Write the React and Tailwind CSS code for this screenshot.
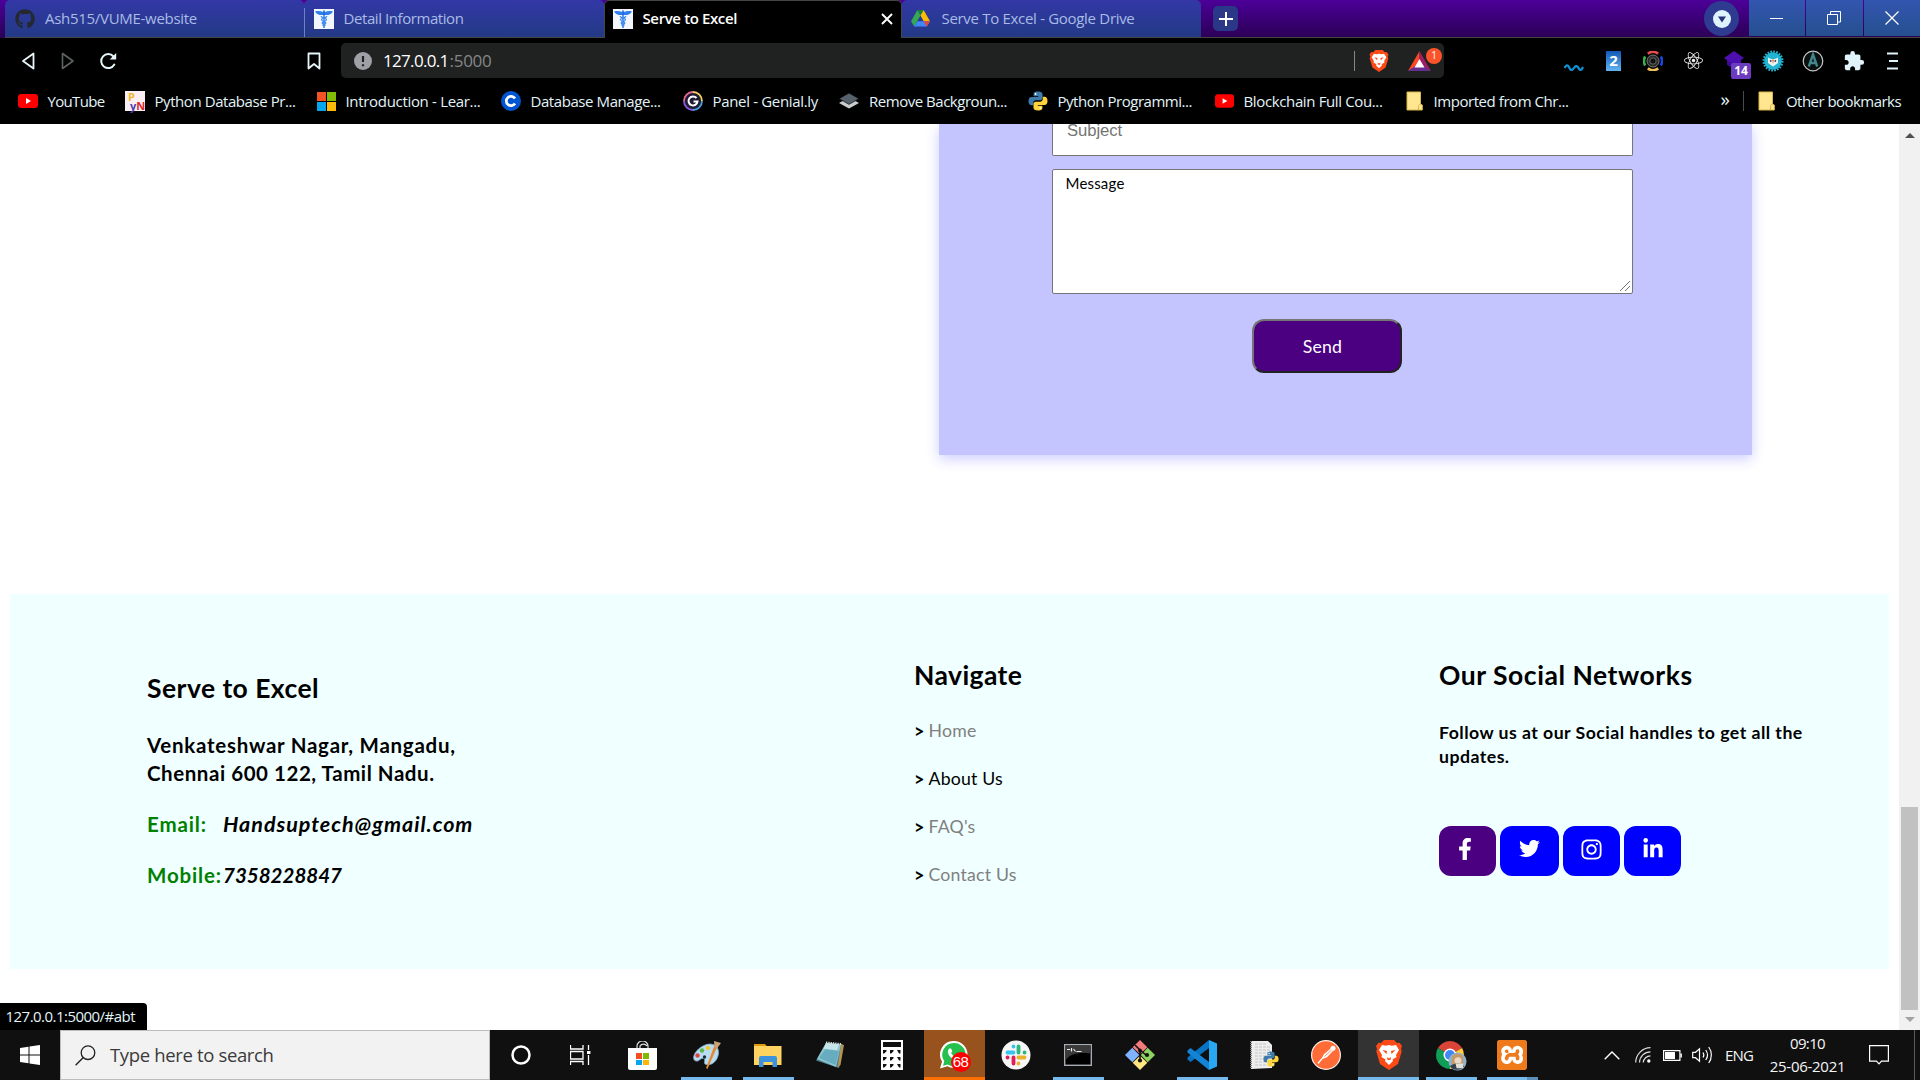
import { FaGithub, FaReact, FaFacebookF, FaTwitter, FaInstagram, FaLinkedinIn } from "react-icons/fa";
import { MdExtension } from "react-icons/md";
import { SiXampp } from "react-icons/si";

/* ---------- shared drawings ---------- */

function YouTube({ className = "w-5 h-[14px]" }) {
  return (
    <svg viewBox="0 0 20 14" className={className}>
      <rect width="20" height="14" rx="3.2" fill="#f00" />
      <path d="M8 4v6l5-3z" fill="#fff" />
    </svg>
  );
}

function Caduceus() {
  return (
    <svg viewBox="0 0 20 20" className="w-5 h-5 shrink-0">
      <rect width="20" height="20" fill="#f3f6fb" />
      <path d="M1 2.500c3-.8 6-.6 8 .6 0-1.200.3-1.800 1-1.800s1 .6 1 1.800c2-1.200 5-1.400 8-.6-1.500 2.600-4 3.600-6.600 3.600H7.600C5 6.100 2.500 5.100 1 2.500z" fill="#2f7fee" />
      <path d="M10 3v16" stroke="#1f62d8" strokeWidth="1.300" />
      <path d="M7 7.200c1 2 5 1.500 5.500 3.300.4 1.700-4.300 1.800-4.300 3.500 0 1.300 3 1.600 2.800 3M13 7.200c-1 2-5 1.500-5.500 3.300-.4 1.700 4.300 1.800 4.300 3.500 0 1.300-3 1.600-2.800 3" fill="none" stroke="#3b8bf2" strokeWidth="1.300" />
    </svg>
  );
}

function Drive() {
  return (
    <svg viewBox="0 0 20 18" className="w-[19px] h-[17px]">
      <path d="M6.700 0h6.600L10 5.900z" fill="#188038" />
      <path d="M6.700 0 10 5.900 3.300 17.600 0 11.800z" fill="#34a853" />
      <path d="M13.300 0 20 11.800h-6.600L10 5.900z" fill="#fbbc04" />
      <path d="M6.600 11.800H20l-3.300 5.800H3.300z" fill="#4285f4" />
      <path d="M13.400 11.800H20l-3.300 5.800z" fill="#ea4335" />
    </svg>
  );
}

function Folder() {
  return (
    <svg viewBox="0 0 17 20" className="w-[17px] h-5">
      <path d="M1 1h13.500v12l1.800 1v5H1z" fill="#ffe68f" stroke="#d9b648" strokeWidth="1" />
      <path d="M12.500 19v-4.500l2-1.500" fill="none" stroke="#d9b648" />
    </svg>
  );
}

function PythonLogo({ className }) {
  return (
    <svg viewBox="0 0 20 20" className={className}>
      <path d="M9.900.5C6 .5 5.600 2 5.600 3.200v2h4.600v.7H3.600C1.600 5.900.5 7.500.5 10s1 4.200 2.900 4.200h1.800v-2.300c0-1.500 1.200-2.600 2.700-2.600h4.500c1.200 0 2.100-1 2.100-2.200V3.200C14.500 1.500 12.900.5 9.900.5z" fill="#3f7cad" />
      <path d="M10.100 19.500c3.900 0 4.300-1.500 4.300-2.700v-2H9.800v-.7h6.600c2 0 3.100-1.600 3.100-4.100s-1-4.200-2.900-4.200h-1.800v2.300c0 1.500-1.200 2.600-2.700 2.600H7.600c-1.200 0-2.100 1-2.100 2.200v3.900c0 1.700 1.600 2.700 4.600 2.700z" fill="#ffd43b" />
      <circle cx="7.600" cy="3" r=".9" fill="#fff" />
      <circle cx="12.400" cy="17" r=".9" fill="#fff" />
    </svg>
  );
}

function BraveLion({ className }) {
  return (
    <svg viewBox="0 0 26 30" className={className}>
      <path d="M8 0h10l3 3 2.500-.3L26 6l-1 3 .7 2.500L22 24l-9 6-9-6L.3 11.500 1 9 0 6l2.500-3.300L5 3z" fill="#fb4a16" />
      <path d="M13 5l3 .8L20 5l3 5-3 5 .5 2-4 2.500L17 21l-4 4-4-4 .5-1.500-4-2.500.5-2-3-5 3-5 4 .8z" fill="#fff" />
      <path d="M6.500 10l4.500 1-.5 3zM19.500 10 15 11l.5 3zM11 17l2 1.500 2-1.500-.5 3h-3z" fill="#fb4a16" />
    </svg>
  );
}

/* ---------- tab strip ---------- */

function TabStrip() {
  const tab = "flex h-[38px] items-center bg-linear-to-b from-[#3237a6] to-[#233a85] text-[#a9bbe6] rounded-t-[5px] border-b border-[#464646]";
  return (
    <div className="flex h-[38px] bg-linear-to-b from-[#4c0099] to-[#2b0055] pl-[5px] text-[15px] whitespace-nowrap">
      <div className={`${tab} w-[299px] pl-[10px]`}>
        <FaGithub className="h-5 w-5 text-[#24292e]" />
        <span className="ml-[10px] tracking-[-0.291px]">Ash515/VUME-website</span>
      </div>
      <div className={`${tab} w-[300px]`}>
        <span className="mt-2 h-[29px] w-px bg-[#6f80c8]" />
        <span className="ml-[9px] flex"><Caduceus /></span>
        <span className="ml-[9.500px] tracking-[-0.424px]">Detail Information</span>
      </div>
      <div className="flex h-[38px] w-[298px] items-center rounded-t-[5px] border-x border-t border-[#464646] bg-black pl-2 pb-[2px] text-white">
        <Caduceus />
        <span className="ml-[9.500px] font-semibold tracking-[-0.379px]">Serve to Excel</span>
        <svg viewBox="0 0 12 12" className="ml-auto mr-[8px] h-3 w-3"><path d="M1 1l10 10M11 1 1 11" stroke="#fff" strokeWidth="1.900" /></svg>
      </div>
      <div className={`${tab} w-[299px] pl-[9px]`}>
        <Drive />
        <span className="ml-[11.500px] tracking-[-0.307px]">Serve To Excel - Google Drive</span>
      </div>
      <div className="flex grow border-b border-[#464646]">
        <div className="ml-[12px] mt-[6px] flex h-[25px] w-[25px] items-center justify-center rounded-[5px] bg-[#2b3787]">
          <svg viewBox="0 0 16 16" className="h-4 w-4"><path d="M8 1v14M1 8h14" stroke="#fff" strokeWidth="2" /></svg>
        </div>
        <div className="ml-auto mr-[10px] mt-px flex h-[35px] w-[35px] items-center justify-center rounded-full bg-[#2f3a91]">
          <svg viewBox="0 0 18 18" className="h-[18px] w-[18px]"><circle cx="9" cy="9" r="9" fill="#def3fb" /><path d="M5 6.500h8L9 12.500z" fill="#26337c" /></svg>
        </div>
        <div className="flex h-[36px] gap-px *:flex *:items-center *:justify-center *:bg-linear-to-b *:from-[#3355b0] *:to-[#25508f]">
          <div className="w-14"><svg viewBox="0 0 14 14" className="h-[14px] w-[14px]"><path d="M0 7.500h13" stroke="#fff" /></svg></div>
          <div className="w-[57px]"><svg viewBox="0 0 14 14" className="mr-px h-[14px] w-[14px]"><path d="M.5 3.500h10v10H.5zM3.500 3.500v-3h10v10.500H10.500" fill="none" stroke="#fff" /></svg></div>
          <div className="w-14"><svg viewBox="0 0 14 14" className="mr-px h-[14px] w-[14px]"><path d="M.5.5l13 13M13.500.5l-13 13" stroke="#fff" strokeWidth="1.200" /></svg></div>
        </div>
      </div>
    </div>
  );
}

/* ---------- toolbar ---------- */

function Bat() {
  return (
    <svg viewBox="0 0 23 20" className="h-5 w-[23px]">
      <path d="M11.500 0 0 20l11.500-6.500z" fill="#ff4724" />
      <path d="M11.500 0 23 20l-11.500-6.500z" fill="#9e1f63" />
      <path d="M0 20h23L11.500 12z" fill="#662d91" />
      <path d="M11.500 8 6.500 16.500h10z" fill="#fff" />
    </svg>
  );
}

function Extensions() {
  return (
    <div className="ml-auto flex h-full items-center pr-[21px]">
      <svg viewBox="0 0 20 8" className="mt-[12px] h-2 w-5"><path d="M.5 5c2-3.500 3.500-3.500 5 0s3.500 1.500 4.500 0 3-3.500 4.500 0 3.500 1.500 4.500-1" fill="none" stroke="#0d93d8" strokeWidth="2.200" /></svg>
      <div className="ml-[22px] flex h-5 w-[15px] items-center justify-center bg-linear-to-b from-[#1058b5] to-[#63b4f2] text-[15px] font-bold text-white">2</div>
      <svg viewBox="0 0 20 20" className="ml-[22px] h-5 w-5">
        <path d="M4.800 2.600a9 9 0 0 1 10.400 0" fill="none" stroke="#e94b4b" strokeWidth="2.600" />
        <path d="M17.800 5.500a9 9 0 0 1 0 9" fill="none" stroke="#1746e0" strokeWidth="2.600" />
        <path d="M15.200 17.400a9 9 0 0 1-10.400 0" fill="none" stroke="#efc05a" strokeWidth="2.600" />
        <path d="M2.200 14.500a9 9 0 0 1 0-9" fill="none" stroke="#34b249" strokeWidth="2.600" />
        <circle cx="10" cy="10" r="6" fill="#2b2b2b" stroke="#8d8d8d" strokeWidth=".8" />
        <circle cx="10" cy="10" r="3.200" fill="#111" stroke="#777" strokeWidth=".8" />
      </svg>
      <FaReact className="ml-[21px] h-[19px] w-[19px] text-[#eee]" />
      <div className="relative ml-[21px] h-5 w-5">
        <svg viewBox="0 0 20 20" className="h-5 w-5"><path d="M3 9v5l7 4V11z" fill="#3c0a94" /><path d="M17 9v5l-7 4V11z" fill="#4a0cad" /><path d="M10 0l10 7-10 7L0 7z" fill="#4d0fae" /></svg>
        <div className="absolute left-[7px] top-[12px] flex h-[16px] w-5 items-center justify-center rounded-[2px] bg-[#6c3cc0] text-[12px] font-bold text-white">14</div>
      </div>
      <svg viewBox="0 0 22 22" className="ml-[18px] h-[22px] w-[22px]">
        <circle cx="11" cy="11" r="8.800" fill="#22b5d3" />
        <circle cx="11" cy="11" r="9.400" fill="none" stroke="#22b5d3" strokeWidth="2.200" strokeDasharray="1.700 1.250" />
        <path d="M6 7.500l3 1.500h4l3-1.500v5.500l-5 3.500-5-3.500z" fill="#eef2f0" />
        <circle cx="8.700" cy="11" r=".9" fill="#345" /><circle cx="13.300" cy="11" r=".9" fill="#345" /><path d="M10 9.500h2l-1 4.500z" fill="#e8783a" />
      </svg>
      <svg viewBox="0 0 22 22" className="ml-[18px] h-[22px] w-[22px]">
        <circle cx="11" cy="11" r="9.800" fill="#0a0f10" stroke="#c9c9c9" strokeWidth="1.200" />
        <path d="M6.800 16.500 11 4.500l4.200 12M8.300 13h5.500" fill="none" stroke="#42868b" strokeWidth="2.400" />
      </svg>
      <MdExtension className="ml-[19px] h-[22px] w-[22px] text-[#e1f3fa]" />
      <svg viewBox="0 0 12 18" className="ml-[22px] h-[18px] w-3"><path d="M0 1.500h11M2 9h9M0 16.500h11" stroke="#e1f3fa" strokeWidth="2" /></svg>
    </div>
  );
}

function Toolbar() {
  return (
    <div className="flex h-[45px] items-center bg-black">
      <svg viewBox="0 0 13 18" className="ml-[21px] h-[18px] w-[14px]"><path d="M12 1.500v15L1.500 9z" fill="none" stroke="#e6f6fb" strokeWidth="1.800" strokeLinejoin="round" /></svg>
      <svg viewBox="0 0 13 18" className="ml-[26px] h-[18px] w-[14px]"><path d="M1 1.500v15L11.500 9z" fill="none" stroke="#5d6264" strokeWidth="1.600" strokeLinejoin="round" /></svg>
      <svg viewBox="0 0 18 18" className="ml-[24px] h-[18px] w-[18px]"><path d="M15.300 12.500A7 7 0 1 1 14.500 4.500" fill="none" stroke="#e6f6fb" strokeWidth="2" strokeLinecap="round" /><path d="M17.200 1v6.500h-6.500z" fill="#e6f6fb" /></svg>
      <svg viewBox="0 0 14 18" className="ml-[190px] h-[18px] w-[14px]"><path d="M1.500 1.500h11v15L7 12l-5.500 4.500z" fill="none" stroke="#e6f6fb" strokeWidth="1.800" strokeLinejoin="round" /></svg>
      <div className="ml-[20px] flex h-[35px] w-[1103px] items-center rounded-[5px] bg-[#202222] pl-[13px] text-[17px]">
        <svg viewBox="0 0 18 18" className="h-[18px] w-[18px]"><circle cx="9" cy="9" r="9" fill="#9da1a7" /><path d="M9 4v6M9 12.200v2" stroke="#202222" strokeWidth="2.200" /></svg>
        <span className="ml-[11px] w-[66.500px] tracking-[-0.680px] text-white">127.0.0.1</span>
        <span className="tracking-[-0.269px] text-[#858786]">:5000</span>
        <span className="ml-auto h-5 w-px bg-[#868686]" />
        <BraveLion className="ml-[14px] h-[22px] w-[20px]" />
        <div className="relative ml-[19px] mr-[13px] flex">
          <Bat />
          <div className="absolute -top-[3px] left-[18px] flex h-4 w-4 items-center justify-center rounded-full bg-[#fb542b] text-[10px] text-white">1</div>
        </div>
      </div>
      <Extensions />
    </div>
  );
}

/* ---------- bookmarks bar ---------- */

function Bookmarks() {
  const item = "flex items-center";
  const icon = "flex w-5 shrink-0 items-center justify-center mr-[9.500px]";
  return (
    <div className="flex h-[41px] items-center bg-black pb-[5px] pl-[18px] text-[15px] whitespace-nowrap text-[#e3f4f8]">
      <div className={`${item} w-[107px]`}><span className={icon}><YouTube /></span><span className="tracking-[-0.667px]">YouTube</span></div>
      <div className={`${item} w-[191px]`}>
        <span className={icon}>
          <span className="flex h-5 w-5 flex-col bg-[#fbeef2] pt-px pl-[3px] text-[11px] leading-[9px] font-bold">
            <span className="text-[#efb52a]">P</span>
            <span className="flex pl-[2px]">
              <span className="text-[#4b3fb5]">y</span>
              <span className="text-[#e0262e]">N</span>
            </span>
          </span>
        </span>
        <span className="tracking-[-0.431px]">Python Database Pr...</span>
      </div>
      <div className={`${item} w-[185px]`}>
        <span className={icon}><span className="grid grid-cols-2 gap-px"><i className="h-[9px] w-[9px] bg-[#f35325]" /><i className="h-[9px] w-[9px] bg-[#81bc06]" /><i className="h-[9px] w-[9px] bg-[#05a6f0]" /><i className="h-[9px] w-[9px] bg-[#ffba08]" /></span></span>
        <span className="tracking-[-0.317px]">Introduction - Lear...</span>
      </div>
      <div className={`${item} w-[182px]`}>
        <span className={icon}><svg viewBox="0 0 20 20" className="h-5 w-5"><circle cx="10" cy="10" r="10" fill="#0056d2" /><path d="M14 7.500A4.700 4.700 0 1 0 14 12.500" fill="none" stroke="#fff" strokeWidth="2.700" /></svg></span>
        <span className="tracking-[-0.424px]">Database Manage...</span>
      </div>
      <div className={`${item} w-[156px]`}>
        <span className={icon}>
          <svg viewBox="0 0 20 20" className="h-5 w-5">
            <circle cx="10" cy="10" r="8.500" fill="#1f1a33" />
            <path d="M10 1a9 9 0 0 1 9 9" fill="none" stroke="#f0cf5a" strokeWidth="1.800" /><path d="M19 10a9 9 0 0 1-9 9" fill="none" stroke="#4f9be0" strokeWidth="1.800" />
            <path d="M10 19a9 9 0 0 1-9-9" fill="none" stroke="#8e5be0" strokeWidth="1.800" /><path d="M1 10a9 9 0 0 1 9-9" fill="none" stroke="#e86a9a" strokeWidth="1.800" />
            <path d="M13.500 7A4.500 4.500 0 1 0 14.500 10.500H10.500" fill="none" stroke="#fff" strokeWidth="2" />
          </svg>
        </span>
        <span className="tracking-[-0.327px]">Panel - Genial.ly</span>
      </div>
      <div className={`${item} w-[189px]`}>
        <span className={icon}><svg viewBox="0 0 20 16" className="h-4 w-5"><path d="M10 4.500 20 10l-10 5.500L0 10z" fill="#c9cdd0" /><path d="M10 0l10 5.700-10 5.700L0 5.700z" fill="#56616b" stroke="#000" strokeWidth=".6" /></svg></span>
        <span className="ml-[0.500px] tracking-[-0.474px]">Remove Backgroun...</span>
      </div>
      <div className={`${item} w-[186px]`}><span className={icon}><PythonLogo className="h-5 w-5" /></span><span className="tracking-[-0.467px]">Python Programmi...</span></div>
      <div className={`${item} w-[190px]`}><span className={icon}><YouTube className="h-[14px] w-[19px]" /></span><span className="tracking-[-0.367px]">Blockchain Full Cou...</span></div>
      <div className={item}><span className={icon}><Folder /></span><span className="tracking-[-0.442px]">Imported from Chr...</span></div>
      <div className="ml-auto flex items-center pr-[19px]">
        <span className="-mt-1 text-[19px] leading-none">»</span>
        <span className="ml-[13px] h-5 w-px bg-[#4b4b4b]" />
        <span className="mr-[11px] ml-[14px]"><Folder /></span>
        <span className="tracking-[-0.543px]">Other bookmarks</span>
      </div>
    </div>
  );
}

/* ---------- web page ---------- */

function ContactCard() {
  return (
    <div className="ml-[939px] h-[331px] w-[813px] bg-[#c4c4ff] pl-[113px] shadow-[0_4px_13px_#cdcdff]">
      <div className="h-[32px] w-[581px] rounded-b-[2px] border border-t-0 border-[#767676] bg-white pl-[14px] font-['Liberation_Sans',sans-serif] text-[16.700px] leading-[13px] tracking-[-0.094px] text-[#757575]">Subject</div>
      <div className="mt-[13px] flex h-[125px] w-[581px] rounded-[2px] border border-[#767676] bg-white pt-[3px] pl-[12.500px] text-[15px] leading-5 tracking-[0.191px] text-black">
        Message
        <svg viewBox="0 0 12 12" className="mr-px mb-px ml-auto h-3 w-3 self-end"><path d="M1 11 11 1M6 11l5-5" stroke="#666" strokeWidth=".9" /></svg>
      </div>
      <button className="mt-[25px] ml-[200px] block h-[54px] w-[150px] rounded-[12px] border-2 border-t-[#767676] border-r-[#222] border-b-[#222] border-l-[#767676] bg-[#4b0082] pt-[2px] pr-[9px] text-[17.700px] tracking-[0.188px] text-white">Send</button>
    </div>
  );
}

function NavLink({ children, active }) {
  return (
    <div className="flex h-12 items-center text-[17.700px] tracking-[0.2px]">
      <span className="w-[14.500px] text-[18px] font-bold text-black">&gt;</span>
      <span className={active ? "text-black" : "text-[#808080]"}>{children}</span>
    </div>
  );
}

function Footer() {
  const social = "flex h-[50px] w-[57px] items-center justify-center rounded-[12px] bg-[#0000ff] pb-[4px] text-white";
  return (
    <div className="mx-[10px] mt-[139px] flex h-[375px] w-[1879px] bg-[#f0ffff] pl-[137px] font-bold text-black">
      <div className="w-[767px] pt-[76px]">
        <h2 className="text-[26.500px] leading-9 tracking-[0.450px]">Serve to Excel</h2>
        <p className="mt-[25px] text-[20.500px] leading-7 tracking-[0.730px]">Venkateshwar Nagar, Mangadu,</p>
        <p className="text-[20.500px] leading-7 tracking-[0.550px]">Chennai 600 122, Tamil Nadu.</p>
        <p className="mt-[23px] flex text-[20.500px] leading-7"><span className="w-[76px] tracking-[0.850px] text-[#008000]">Email:</span><i className="text-[21.500px] tracking-[0.980px]">Handsuptech@gmail.com</i></p>
        <p className="mt-[23px] flex text-[20.500px] leading-7"><span className="w-[76px] tracking-[0.850px] text-[#008000]">Mobile:</span><i className="tracking-[0.010px]">7358228847</i></p>
      </div>
      <div className="w-[525px] pt-[63px]">
        <h2 className="text-[26.500px] leading-9 tracking-[0.400px]">Navigate</h2>
        <div className="mt-[14px] font-normal">
          <NavLink>Home</NavLink>
          <NavLink active>About Us</NavLink>
          <NavLink>FAQ's</NavLink>
          <NavLink>Contact Us</NavLink>
        </div>
      </div>
      <div className="pt-[63px]">
        <h2 className="text-[26.500px] leading-9 tracking-[0.530px]">Our Social Networks</h2>
        <p className="mt-[28px] text-[17.700px] leading-6 tracking-[0.460px]">Follow us at our Social handles to get all the<br />updates.</p>
        <div className="mt-[57px] flex gap-1">
          <div className="flex h-[50px] w-[57px] items-center justify-center rounded-[12px] bg-[#4b0082] pr-[6px] pb-[5px] text-white"><FaFacebookF className="h-[22px] w-[22px]" /></div>
          <div className="flex h-[50px] w-[59px] items-center justify-center rounded-[12px] bg-[#0000ff] pb-[5px] text-white"><FaTwitter className="h-[21px] w-[21px]" /></div>
          <div className={social}><FaInstagram className="h-[23px] w-[23px]" /></div>
          <div className={social}><FaLinkedinIn className="h-[22px] w-[22px]" /></div>
        </div>
      </div>
    </div>
  );
}

function Scrollbar() {
  return (
    <div className="flex w-[21px] flex-col items-center bg-[#f1f1f1]">
      <svg viewBox="0 0 10 5" className="mt-[9px] h-[5px] w-[10px]"><path d="M5 0l5 5H0z" fill="#505050" /></svg>
      <div className="mt-[669px] h-[203px] w-[17px] bg-[#c1c1c1]" />
      <svg viewBox="0 0 10 5" className="mt-[7px] h-[5px] w-[10px]"><path d="M5 5L0 0h10z" fill="#a3a3a3" /></svg>
    </div>
  );
}

function WebPage() {
  return (
    <div className="relative flex h-[906px] overflow-hidden bg-white">
      <div className="w-[1899px] overflow-hidden font-[Lato,sans-serif]">
        <ContactCard />
        <Footer />
      </div>
      <Scrollbar />
      <div className="absolute bottom-0 left-0 h-[27px] w-[147px] rounded-tr-[4px] bg-black pl-[5.500px] text-[15px] leading-[27px] tracking-[-0.530px] text-[#e3f4f8]">127.0.0.1:5000/#abt</div>
    </div>
  );
}

/* ---------- taskbar ---------- */

function Task({ w, line, bg = "", className = "", children }) {
  return (
    <div className={`flex h-[50px] shrink-0 flex-col items-center ${w} ${bg} ${className}`}>
      <div className="flex h-[47px] items-center justify-center pt-[3px]">{children}</div>
      {line && <div className={`h-[3px] ${line}`} />}
    </div>
  );
}

function TaskApps() {
  const blue = "w-[51px] bg-[#76b9ed]";
  return (
    <div className="flex">
      <Task w="w-[61px]"><svg viewBox="0 0 20 20" className="h-5 w-5"><circle cx="10" cy="10" r="8.500" fill="none" stroke="#fff" strokeWidth="2.500" /></svg></Task>
      <Task w="w-[58px]">
        <svg viewBox="0 0 21 20" className="h-5 w-[21px]"><path d="M.5 0v4h12.500V0M.5 20v-3.500h12.500V20M.5 6.500h12.500v7.500H.5zM18.500 0v5M18.500 10v10" fill="none" stroke="#fff" strokeWidth="1.300" /><rect x="17" y="6" width="3.400" height="3" fill="#fff" /></svg>
      </Task>
      <Task w="w-[67px]">
        <svg viewBox="0 0 29 29" className="h-[29px] w-[29px]"><path d="M9 8V5a5.500 5 0 0 1 11 0v3M12 8V5a4 3.500 0 0 1 7 0" fill="none" stroke="#ddd" strokeWidth="1.200" /><path d="M0 7h29v20a2 2 0 0 1-2 2H2a2 2 0 0 1-2-2z" fill="#fff" /><path d="M8 12h6v6H8z" fill="#f25022" /><path d="M15 12h6v6h-6z" fill="#7fba00" /><path d="M8 19h6v5H8z" fill="#00a4ef" /><path d="M15 19h6v5h-6z" fill="#ffb900" /></svg>
      </Task>
      <Task w="w-[61px]" line={blue}>
        <svg viewBox="0 0 30 30" className="h-[30px] w-[30px]">
          <path d="M12 5.500C19 2 27 5 26.500 13c-.5 8-7 13-12.500 11.500-3.500-1 .5-5-2.500-6-3.500-1-4 3.500-7.500 2.500C-1 20 2 10 12 5.500z" fill="#b9dcf2" stroke="#7fa9c6" strokeWidth=".8" />
          <circle cx="5.500" cy="15.500" r="2.200" fill="#df4540" /><circle cx="10" cy="10.500" r="2.200" fill="#5cb749" /><circle cx="16" cy="8" r="2.200" fill="#f2c832" /><circle cx="12.500" cy="17" r="1.700" fill="#1c2c36" />
          <path d="M26 5 15.500 29l-1.500-1L23 4z" fill="#e28a2e" /><path d="m22 1 7 2-4 5.500-2.500-1z" fill="#c9a275" />
        </svg>
      </Task>
      <Task w="w-[62px]" line={blue}>
        <svg viewBox="0 0 28 24" className="h-6 w-7"><path d="M0 1h11l2 2.500H0z" fill="#d99a0b" /><path d="M0 3h27.500v19H0z" fill="#ffd35f" /><path d="M5 24V15a2 2 0 0 1 2-2h14a2 2 0 0 1 2 2v9h-4.500v-5h-9v5z" fill="#3c92dc" /></svg>
      </Task>
      <Task w="w-[62px]">
        <svg viewBox="0 0 29 28" className="h-7 w-[29px]"><path d="M10 2 26 3l1 4-4 20L0 19.500z" fill="#4f7f8c" /><path d="M25 3l3 1-3.500 20-3 3z" fill="#b59350" /><path d="M10 2l15 1.500-5 22.500L1 18z" fill="#8cc6d3" /><path d="M9.500 8 23 10l-3.500 14L3 17z" fill="#68adbf" /><path d="M10 2l13 1.200-2 6-13.500-1.500z" fill="#c5e5ea" /><path d="M10 1.500 25 3" stroke="#ddd" strokeWidth="2" strokeDasharray="1.300 1" /></svg>
      </Task>
      <Task w="w-[62px]">
        <svg viewBox="0 0 22 30" className="h-[30px] w-[22px]"><rect width="22" height="30" fill="#fff" /><rect x="2" y="2" width="18" height="5" fill="#111" /><path d="M2 10h3.500v1.200L3.200 13.500H2zM9 10h3.500v1.200l-2.300 2.300H9zM16 10h3.500v3.500H18zM2 17h3.500v1.200l-2.300 2.300H2zM9 17h3.500v1.200l-2.300 2.300H9zM16 17h3.500v3.500H18zM2 24h3.500v1.200l-2.300 2.300H2zM9 24h3.500v1.200l-2.300 2.300H9zM16 24h3.500v3.500H18z" fill="#111" /></svg>
      </Task>
      <Task w="w-[61px]" bg="bg-[#97521d]" line="w-[61px] bg-[#ff6f00]" className="ml-px">
        <div className="relative mr-[2px] h-[28px] w-[28px]">
          <svg viewBox="0 0 28 28" className="h-7 w-7"><path d="M14 0a13.500 13.500 0 0 1 0 27c-2.500 0-4.500-.6-6.500-1.700L0 27.500l2-7A13.500 13.500 0 0 1 14 0z" fill="#fff" /><path d="M14 2a11.600 11.600 0 0 1 0 23.200c-2.300 0-4.300-.6-6.200-1.800L3 24.800l1.300-4.600A11.600 11.600 0 0 1 14 2z" fill="#25c04e" /><path d="M9.500 7.500c1-.8 1.800 0 2.700 2.400.2.700-.8 1.400-1 2 1 2 2.300 3.300 4.600 4.200.8-.4 1.500-1.700 2.100-1.400 2 .9 2.800 1.300 2.500 2.400-1 3-5 2.800-8.700 0-3.700-3-5.300-7.200-2.200-9.600z" fill="#fff" /></svg>
          <span className="absolute top-[11px] left-[11px] flex h-[20px] w-[20px] items-center justify-center rounded-full bg-[#f00] font-['Liberation_Sans',sans-serif] text-[15px] tracking-[-0.500px] text-white">68</span>
        </div>
      </Task>
      <Task w="w-[62px]">
        <svg viewBox="0 0 30 30" className="h-[30px] w-[30px]"><circle cx="15" cy="15" r="14.500" fill="#f6f6f6" /><g strokeWidth="3.800" strokeLinecap="round"><path d="M12.500 6.500v.1M6.500 12.500h6" stroke="#36c5f0" /><path d="M17.500 6.500v6M23.500 12.500h.1" stroke="#2eb67d" /><path d="M17.500 17.500h6M17.500 23.500v.1" stroke="#ecb22e" /><path d="M12.500 17.500v6M6.500 17.500h.1" stroke="#e01e5a" /></g></svg>
      </Task>
      <Task w="w-[62px]" line={blue}>
        <svg viewBox="0 0 28 22" className="h-[22px] w-7"><rect x=".7" y=".7" width="26.600" height="20.600" fill="#000" stroke="#a7adb3" strokeWidth="1.400" /><path d="M1.500 1.500h25v8C15 8 4 10 1.500 17z" fill="#3a3a3a" /><path d="M3 5.500h3M7.500 4v3.500M9.500 5l2 2.500M12.500 7.500h5" stroke="#eee" strokeWidth="1.200" /></svg>
      </Task>
      <Task w="w-[62px]">
        <svg viewBox="0 0 30 30" className="h-[30px] w-[30px]"><path d="M15 0l7.300 7.300-7.300 7-7.300-7z" fill="#f27b7b" /><path d="M7.300 7.700 14.300 15l-7 7.300L0 15z" fill="#80b3ff" /><path d="M22.700 7.700 30 15l-7.300 7.300-7-7.300z" fill="#8dd35f" /><path d="M15 15.700l7.300 7L15 30l-7.300-7.300z" fill="#ffe680" /><path d="M10 5l5 5v12M15 10l6 5" fill="none" stroke="#111" strokeWidth="1.600" /><circle cx="15" cy="10.500" r="1.900" fill="#111" /><circle cx="15" cy="20.500" r="2.100" fill="#111" /><circle cx="22" cy="15" r="2.100" fill="#111" /></svg>
      </Task>
      <Task w="w-[62px]" line={blue}>
        <svg viewBox="0 0 30 30" className="h-[30px] w-[30px]"><path d="M22 0v8L3.500 22 .5 19.500v-2z" fill="#0a74c4" /><path d="M22 30v-8L3.500 8 .5 10.500v2z" fill="#1484d6" /><path d="M22 0l8 3.500v23L22 30z" fill="#2aa7f3" /></svg>
      </Task>
      <Task w="w-[62px]">
        <div className="relative h-[28px] w-7">
          <svg viewBox="0 0 28 28" className="h-7 w-7"><path d="M1 0h17l4 4v23L1 28z" fill="#eee" /><path d="M1 0v28" stroke="#777" strokeWidth="2" strokeDasharray="1 1" /><path d="M5 3h12M5 6h15M5 9h15M5 12h15M5 15h13M5 18h13M5 21h12M5 24h12" stroke="#c4c4c4" strokeDasharray="3 1" /></svg>
          <PythonLogo className="absolute top-[10px] left-[13px] h-4 w-4" />
        </div>
      </Task>
      <Task w="w-[62px]">
        <svg viewBox="0 0 30 30" className="h-[30px] w-[30px]"><circle cx="15" cy="15" r="14.400" fill="#ff6c37" stroke="#fbeee8" strokeWidth="1.200" /><path d="M7 23.500 15 14" stroke="#fff" strokeWidth="1.300" /><path d="M13 14.500 20 8.500l2 2-6 6.500-4.500 1.500z" fill="#fff" stroke="#fff" strokeWidth=".6" /><circle cx="22" cy="8.300" r="2.500" fill="#fff" /><path d="M13.500 16.500 20.500 10" stroke="#ff6c37" strokeWidth=".8" /></svg>
      </Task>
      <Task w="w-[61px]" bg="bg-[#333333]" line="w-[61px] bg-[#76b9ed]" className="ml-px"><BraveLion className="h-[30px] w-[26px]" /></Task>
      <Task w="w-[62px]" line={blue} className="ml-px">
        <div className="relative h-[28px] w-[30px]">
          <svg viewBox="0 0 28 28" className="h-7 w-7"><path d="M14 14 1.900 7A14 14 0 0 1 26.100 7z" fill="#db4437" /><path d="M14 14 26.100 7A14 14 0 0 1 14 28z" fill="#ffcd40" /><path d="M14 14v14A14 14 0 0 1 1.900 7z" fill="#0f9d58" /><circle cx="14" cy="14" r="6.500" fill="#fff" /><circle cx="14" cy="14" r="5" fill="#4285f4" /></svg>
          <svg viewBox="0 0 20 20" className="absolute top-[11px] left-[12px] h-[19px] w-[19px]"><circle cx="10" cy="10" r="9.500" fill="#8fb3cb" /><path d="M4 7c0-7 12-7 12 0v6H4z" fill="#c69a68" /><circle cx="10.500" cy="9" r="3.600" fill="#ecd9c4" /><path d="M2 15c4-4 12-4 15 0-3 5-12 5-15 0z" fill="#34414f" /><path d="M8 12h8v5H9z" fill="#e2dfd8" /></svg>
        </div>
      </Task>
      <div className="ml-[5px] flex h-[50px] w-[51px] flex-col items-center">
        <div className="flex h-[47px] items-center pt-[3px]">
          <div className="mr-px flex h-[30px] w-[30px] items-center justify-center rounded-[3px] bg-[radial-gradient(circle,#fff_60%,#ee7a1c_62%)]"><SiXampp className="h-[30px] w-[30px] shrink-0 text-[#ee7a1c]" /></div>
        </div>
        <div className="flex h-[3px] w-[51px]"><span className="w-[40px] bg-[#76b9ed]" /><span className="w-[11px] bg-[#5b8fb8]" /></div>
      </div>
    </div>
  );
}

function Taskbar() {
  return (
    <div className="flex h-[50px] bg-[#101010] text-[#f2f2f2]">
      <div className="flex w-[60px] items-center justify-center"><svg viewBox="0 0 20 20" className="h-5 w-5"><path d="M0 3l8.500-1.200v7.700H0zM9.500 1.600 20 0v9.500H9.500zM0 10.500h8.500v7.700L0 17zM9.500 10.500H20V20L9.500 18.400z" fill="#fff" /></svg></div>
      <div className="flex w-[430px] items-center border border-[#bdbdbd] bg-[#f2f2f2] pl-[14px]">
        <svg viewBox="0 0 21 21" className="h-[21px] w-[21px]"><circle cx="13" cy="7.700" r="6.800" fill="none" stroke="#222" strokeWidth="1.300" /><path d="M8.300 12.500.6 20.200" stroke="#222" strokeWidth="1.400" /></svg>
        <span className="ml-[14px] text-[18.500px] tracking-[-0.350px] text-[#3a3a3a]">Type here to search</span>
      </div>
      <TaskApps />
      <div className="ml-auto flex items-center text-[15px] text-[#f5f5f5]">
        <svg viewBox="0 0 16 9" className="h-[9px] w-4"><path d="M.7 8.300 8 1l7.300 7.300" fill="none" stroke="#fff" strokeWidth="1.400" /></svg>
        <svg viewBox="0 0 16 16" className="ml-[15px] h-4 w-4"><path d="M.7 15.500A15 15 0 0 1 15.500.7M4.500 15.500A11 11 0 0 1 15.500 4.800M8.200 15.500A7.400 7.400 0 0 1 15.500 8.800" fill="none" stroke="#ddd" strokeWidth="1.200" /><circle cx="13.800" cy="14" r="1.700" fill="#fff" /></svg>
        <svg viewBox="0 0 19 11" className="ml-[12px] h-[11px] w-[19px]"><path d="M.6.6h16.300v9.800H.6zM18.300 3.500v4" fill="none" stroke="#fff" strokeWidth="1.200" /><path d="M2 2h10v7H2z" fill="#fff" /></svg>
        <svg viewBox="0 0 21 18" className="ml-[10px] h-[18px] w-[21px]"><path d="M.7 6.300h2.800l4-3.500v12.400l-4-3.500H.7z" fill="none" stroke="#fff" strokeWidth="1.200" /><path d="M11 6.500c1 1.500 1 3.500 0 5M13.700 4c2.200 3 2.200 7 0 10M16.700 1c3.500 4.500 3.500 11.500 0 16" fill="none" stroke="#fff" strokeWidth="1.200" /></svg>
        <span className="ml-[12px] w-[28px] tracking-[-0.845px]">ENG</span>
        <div className="ml-[16px] flex w-[77px] flex-col items-center leading-[23px]"><span className="tracking-[-0.649px]">09:10</span><span className="tracking-[-0.280px]">25-06-2021</span></div>
        <svg viewBox="0 0 20 20" className="ml-[23px] h-5 w-5"><path d="M.6.6h18.800v15.600h-6.900L10 18.800l-2.500-2.600H.6z" fill="none" stroke="#fff" strokeWidth="1.200" /></svg>
        <span className="mr-[5px] ml-[25px] h-[50px] w-px bg-[#5a5a5a]" />
      </div>
    </div>
  );
}

export default function App() {
  return (
    <div className="h-[1080px] w-[1920px] overflow-hidden bg-white font-['Open_Sans',sans-serif]">
      <TabStrip />
      <Toolbar />
      <Bookmarks />
      <WebPage />
      <Taskbar />
    </div>
  );
}
